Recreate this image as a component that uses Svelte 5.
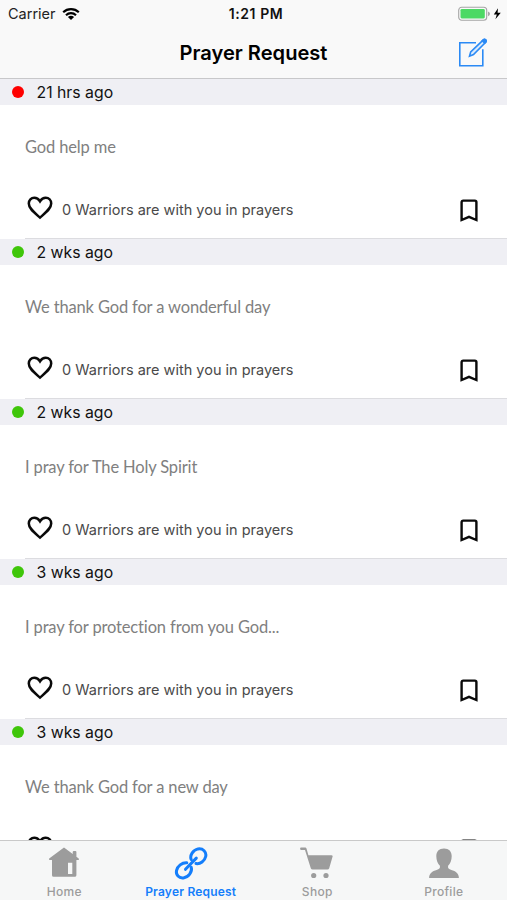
<script lang="ts">
  type Prayer = { age: string; text: string; urgent?: boolean; warriors: number };

  const prayers: Prayer[] = [
    { age: "21 hrs ago", text: "God help me", urgent: true, warriors: 0 },
    { age: "2 wks ago", text: "We thank God for a wonderful day", warriors: 0 },
    { age: "2 wks ago", text: "I pray for The Holy Spirit", warriors: 0 },
    { age: "3 wks ago", text: "I pray for protection from you God...", warriors: 0 },
    { age: "3 wks ago", text: "We thank God for a new day", warriors: 0 },
  ];

  const tabs = ["Home", "Prayer Request", "Shop", "Profile"];
  let active = $state("Prayer Request");
</script>

<div class="screen">
  <header>
    <div class="status-bar">
      <div class="carrier">
        <span>Carrier</span>
        <svg width="18" height="14" viewBox="0 0 18 14">
          <path d="M1.2 5.2a11.2 11.2 0 0 1 15.6 0M4 8.2a7.2 7.2 0 0 1 10 0" fill="none" stroke="#000" stroke-width="2.2" />
          <path d="M9 13L5.9 10.1a4.5 4.5 0 0 1 6.2 0z" />
        </svg>
      </div>
      <span class="time">1:21 PM</span>
      <div class="battery">
        <svg width="44" height="16" viewBox="0 0 44 16">
          <rect x="0.7" y="1.2" width="28" height="13" rx="3" fill="#fafafa" stroke="#a5a5a5" stroke-width="1.1" />
          <rect x="2.5" y="3" width="24.3" height="9.4" rx="1.3" fill="#4cd964" />
          <path d="M30 5.4q2 .7 2 2.4t-2 2.4z" fill="#a5a5a5" />
          <path d="M40 2.3L35.8 8.5h3l-1.4 4.8 5.4-6.5h-3.2z" />
        </svg>
      </div>
    </div>
    <div class="nav-bar">
      <h1>Prayer Request</h1>
      <button class="compose" aria-label="New prayer request">
        <svg width="30" height="30" viewBox="0 0 30 30" fill="none" stroke="#2b8af5" stroke-width="1.6">
          <path d="M18 4.8H1.8v22.9h23V11.2" />
          <path d="M11.5 18.2l1.2-4.3L25.3 1.8q1.2-1 2.3.1t.1 2.3L15.5 16.5z" fill="#d9eafd" />
          <path d="M25.3 1.8q1.2-1 2.3.1t.1 2.3l-1 1L24.3 2.8z" fill="#2b8af5" />
        </svg>
      </button>
    </div>
  </header>

  <main>
    {#each prayers as prayer}
      <section>
        <div class="age-row">
          <span class="dot" class:urgent={prayer.urgent}></span>
          <span class="age">{prayer.age}</span>
        </div>
        <div class="card">
          <p class="message">{prayer.text}</p>
          <div class="actions">
            <svg class="heart" width="26" height="24" viewBox="0 0 26 24">
              <path d="M13 21.6C7 16.3 1.8 12.4 1.8 7.6 1.8 4.3 4.2 1.8 7.3 1.8c2.3 0 4.3 1.3 5.7 3.5 1.4-2.2 3.4-3.5 5.7-3.5 3.1 0 5.5 2.5 5.5 5.8 0 4.8-5.2 8.7-11.2 14z" fill="none" stroke="#0a0a0a" stroke-width="2.5" />
            </svg>
            <span class="warriors">{prayer.warriors} Warriors are with you in prayers</span>
            <svg class="bookmark" width="18" height="24" viewBox="0 0 18 24">
              <path d="M1.6 21V3.2Q1.6 1.6 3.2 1.6H14.8Q16.4 1.6 16.4 3.2V21L9 17.8z" fill="none" stroke="#0a0a0a" stroke-width="2.4" />
            </svg>
          </div>
        </div>
      </section>
    {/each}
  </main>

  <nav>
    {#each tabs as tab}
      <button class="tab" class:active={tab === active} onclick={() => (active = tab)}>
        <svg width="34" height="34" viewBox="0 0 34 34" fill="currentColor">
          {#if tab === "Home"}
            <path fill-rule="evenodd" d="M17 .5L2.2 11.6q-.8 1.2.6 1.4H5v15.2q0 1.6 1.6 1.6h21.2q1.6 0 1.6-1.6V13h1.9q1.3-.2.4-1.4l-2.3-1.8V5q0-1-1-1h-1.5q-1.2 0-1.2 1v2zM21 15.8h4.3v11.3H21z" />
          {:else if tab === "Prayer Request"}
            <g fill="none" stroke="currentColor" stroke-width="3" stroke-linecap="round">
              <path d="M17.2 12.5C15.5 8.5 19 3 24 1.9c5-.8 8.7 3.1 7.7 7.6-1 4.5-5.5 7.8-9.7 7" />
              <path d="M12.8 15.8C8 15.5 3.4 19.2 2.5 23.6c-.8 4.4 2.4 7.8 6.9 7.3 5-.7 9.2-5.9 7.8-10.6" />
              <path d="M11.5 22.3L22.3 11.1" />
            </g>
          {:else if tab === "Shop"}
            <path d="M.7.6h4.5q1 0 1.3 1l1.9 6.6h23q1.5 0 1.2 1.4l-3.4 11.6q-.4 1.4-1.9 1.4H12.7q-1.5 0-1.9-1.4L5 3H.7Q-.5 1.8.7.6z" />
            <circle cx="13.7" cy="28.5" r="2.6" />
            <circle cx="26" cy="28.5" r="2.6" />
          {:else}
            <path d="M17 1.5c5 0 7.7 3 7.7 7.5 0 4-1.4 7.8-3.6 9.8-.4 2.6.6 3.3 3.3 4.3 4.2 1.3 7.5 3.2 7.5 8H2.1c0-4.800 3.300-6.700 7.500-8 2.700-1 3.700-1.700 3.300-4.300C10.700 16.800 9.300 13 9.300 9c0-4.500 2.700-7.500 7.700-7.500z" />
          {/if}
        </svg>
        <span>{tab}</span>
      </button>
    {/each}
  </nav>
</div>

<style>
  :global(body) {
    background: #fff;
  }
  .screen {
    height: 900px;
    display: flex;
    flex-direction: column;
    overflow: hidden;
    background: #fff;
    font-family: Inter, "Liberation Sans", sans-serif;
    color: #111;
  }
  button {
    border: 0;
    padding: 0;
    background: none;
    font: inherit;
  }
  svg {
    display: block;
  }

  header {
    flex: none;
    height: 79px;
    box-sizing: border-box;
    background: #f9f9f9;
    border-bottom: 1px solid #c8c8ca;
  }
  .status-bar {
    height: 27px;
    padding: 0 5px 0 8px;
    display: grid;
    grid-template-columns: 1fr auto 1fr;
    align-items: center;
    font-size: 14.5px;
  }
  .carrier {
    display: flex;
    align-items: center;
    gap: 6px;
    color: #222;
  }
  .time {
    padding-left: 2px;
    font-size: 14px;
    font-weight: 600;
    letter-spacing: 0.6px;
  }
  .battery {
    justify-self: end;
  }
  .nav-bar {
    height: 51px;
    padding: 0 19px;
    display: grid;
    grid-template-columns: 30px 1fr 30px;
    align-items: center;
  }
  h1 {
    grid-column: 2;
    margin: 0;
    text-align: center;
    font-size: 20.1px;
    font-weight: 600;
    color: #000;
  }

  main {
    flex: 1;
    min-height: 0;
    overflow: hidden;
  }
  .age-row {
    height: 26px;
    padding-left: 12px;
    display: flex;
    align-items: center;
    gap: 12.5px;
    background: #efeff4;
    font-size: 15.8px;
  }
  .dot {
    width: 12px;
    height: 12px;
    border-radius: 50%;
    background: #3fc60a;
  }
  .dot.urgent {
    background: #fe0000;
  }
  .card {
    height: 134px;
    box-sizing: border-box;
    padding: 30px 29px 0 25px;
  }
  section:not(:last-child) .card {
    background: linear-gradient(#dcdce0, #dcdce0) 25px 100% / 100% 1px no-repeat;
  }
  .message {
    margin: 0;
    line-height: 24px;
    font-family: Lato, "Liberation Sans", sans-serif;
    font-size: 16.5px;
    letter-spacing: -0.15px;
    font-variant-ligatures: none;
    color: #808080;
  }
  .actions {
    margin-top: 36px;
    display: flex;
    align-items: flex-start;
  }
  .heart {
    margin: 1px 9px 0 2px;
  }
  .warriors {
    flex: 1;
    padding-top: 6px;
    line-height: 18px;
    font-size: 14.5px;
    color: #4a4a4a;
  }
  .bookmark {
    margin-top: 4px;
  }

  nav {
    flex: none;
    height: 60px;
    box-sizing: border-box;
    border-top: 1px solid #c9c9c9;
    background: #f6f7f7;
    display: flex;
  }
  .tab {
    flex: 1;
    min-width: 0;
    display: flex;
    flex-direction: column;
    align-items: center;
    padding-top: 6px;
    color: #9c9c9c;
    font-size: 12px;
    font-weight: 500;
    letter-spacing: 0.3px;
    white-space: nowrap;
  }
  .tab:first-child {
    padding-left: 1px;
  }
  .tab span {
    margin-top: 3px;
    line-height: 15px;
  }
  .tab.active {
    color: #147efb;
    font-weight: 600;
    letter-spacing: 0.2px;
  }
</style>
